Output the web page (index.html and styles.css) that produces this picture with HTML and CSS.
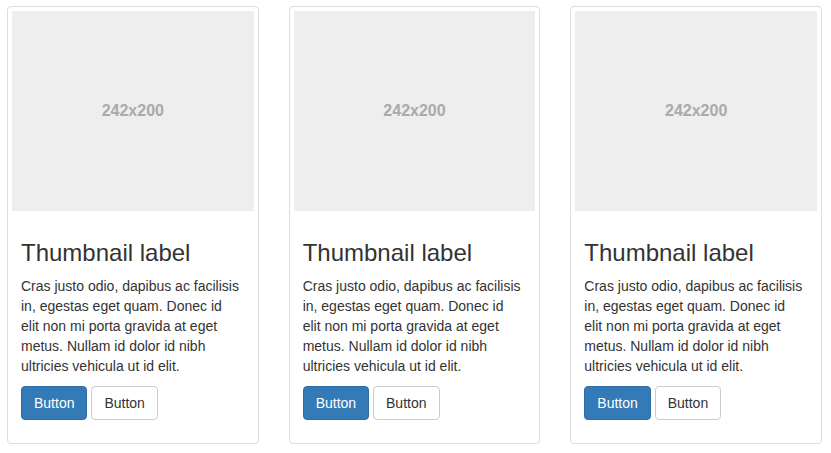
FILE: index.html
```html
<!DOCTYPE html>
<html>
<head>
<meta charset="utf-8">
<link rel="stylesheet" href="styles.css">
</head>
<body>
<div class="row">
  <div class="thumbnail">
    <div class="holder"><span>242x200</span></div>
    <div class="caption">
      <h3>Thumbnail label</h3>
      <p class="text">Cras justo odio, dapibus ac facilisis in, egestas eget quam. Donec id elit non mi porta gravida at eget metus. Nullam id dolor id nibh ultricies vehicula ut id elit.</p>
      <p class="actions"><a class="btn btn-primary">Button</a> <a class="btn btn-default">Button</a></p>
    </div>
  </div>
  <div class="thumbnail">
    <div class="holder"><span>242x200</span></div>
    <div class="caption">
      <h3>Thumbnail label</h3>
      <p class="text">Cras justo odio, dapibus ac facilisis in, egestas eget quam. Donec id elit non mi porta gravida at eget metus. Nullam id dolor id nibh ultricies vehicula ut id elit.</p>
      <p class="actions"><a class="btn btn-primary">Button</a> <a class="btn btn-default">Button</a></p>
    </div>
  </div>
  <div class="thumbnail">
    <div class="holder"><span>242x200</span></div>
    <div class="caption">
      <h3>Thumbnail label</h3>
      <p class="text">Cras justo odio, dapibus ac facilisis in, egestas eget quam. Donec id elit non mi porta gravida at eget metus. Nullam id dolor id nibh ultricies vehicula ut id elit.</p>
      <p class="actions"><a class="btn btn-primary">Button</a> <a class="btn btn-default">Button</a></p>
    </div>
  </div>
</div>
</body>
</html>
```
FILE: styles.css
```css
html, body {
  margin: 0;
  padding: 0;
  background: #fff;
}
body {
  font-family: "Liberation Sans", Arial, Helvetica, sans-serif;
  font-size: 14px;
  line-height: 20px;
  color: #333;
}
.row {
  display: grid;
  grid-template-columns: repeat(3, 1fr);
  column-gap: 30px;
  width: 815px;
  padding: 6px 0 0 7px;
}
.thumbnail {
  border: 1px solid #ddd;
  border-radius: 4px;
  padding: 4px;
  background: #fff;
}
.holder {
  height: 200px;
  background: #eee;
  display: flex;
  align-items: center;
  justify-content: center;
}
.holder span {
  font-weight: bold;
  font-size: 16px;
  color: #aaa;
}
.caption {
  padding: 9px;
}
.caption h3 {
  margin: 20px 0 10px;
  font-size: 24px;
  line-height: 1.1;
  font-weight: 500;
  color: #333;
}
.caption p {
  margin: 0 0 10px;
}
.caption .text {
  padding-right: 2px;
}
.btn {
  display: inline-block;
  padding: 6px 12px;
  font-size: 14px;
  line-height: 20px;
  border: 1px solid transparent;
  border-radius: 4px;
  text-decoration: none;
  cursor: pointer;
}
.btn-primary {
  color: #fff;
  background: #337ab7;
  border-color: #2e6da4;
}
.btn-default {
  color: #333;
  background: #fff;
  border-color: #ccc;
}
```
